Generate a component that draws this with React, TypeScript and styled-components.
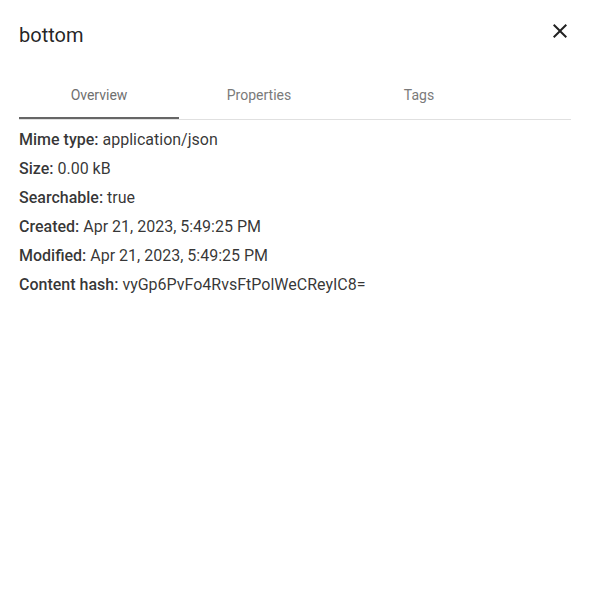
import styled, { createGlobalStyle } from 'styled-components';

const GlobalStyle = createGlobalStyle`
  body {
    margin: 0;
    background: #fff;
    font-family: Roboto, "Liberation Sans", sans-serif;
    -webkit-font-smoothing: antialiased;
  }
`;

const Dialog = styled.div`
  width: 589px;
  height: 591px;
  box-sizing: border-box;
  padding: 0 18px 0 19px;
  background: #fff;
`;

const TitleBar = styled.div`
  display: flex;
  justify-content: space-between;
  align-items: flex-start;
  height: 66px;
`;

const Title = styled.h2`
  margin: 19px 0 0;
  font-size: 20px;
  font-weight: 400;
  line-height: 32px;
  color: rgba(0, 0, 0, 0.87);
`;

const CloseButton = styled.button`
  display: flex;
  width: 24px;
  height: 24px;
  margin: 19px -0.5px 0 0;
  padding: 0;
  border: none;
  background: none;
  color: rgba(0, 0, 0, 0.87);
  cursor: pointer;
`;

const TabBar = styled.div`
  display: flex;
  border-bottom: 1px solid #e0e0e0;
  margin-top: 4px;
`;

const Tab = styled.div<{ $active?: boolean }>`
  position: relative;
  width: 160px;
  height: 49px;
  display: flex;
  align-items: center;
  justify-content: center;
  font-size: 14px;
  font-weight: 400;
  color: ${({ $active }) => ($active ? '#6f6f6f' : '#7a7a7a')};

  &::after {
    content: '';
    display: ${({ $active }) => ($active ? 'block' : 'none')};
    position: absolute;
    left: 0;
    right: 0;
    bottom: 0;
    height: 2px;
    background: #666;
  }
`;

const Details = styled.div`
  padding-top: 5px;
`;

const Row = styled.div`
  font-size: 16px;
  line-height: 29px;
  color: rgba(0, 0, 0, 0.8);
`;

const Label = styled.span`
  font-weight: 500;
`;

const rows: [string, string][] = [
  ['Mime type', 'application/json'],
  ['Size', '0.00 kB'],
  ['Searchable', 'true'],
  ['Created', 'Apr 21, 2023, 5:49:25 PM'],
  ['Modified', 'Apr 21, 2023, 5:49:25 PM'],
  ['Content hash', 'vyGp6PvFo4RvsFtPolWeCReyIC8='],
];

export default function App() {
  return (
    <>
      <GlobalStyle />
      <Dialog>
        <TitleBar>
          <Title>bottom</Title>
          <CloseButton aria-label="close">
            <svg width="24" height="24" viewBox="0 0 24 24" fill="currentColor">
              <path d="M19 6.41 17.59 5 12 10.59 6.41 5 5 6.41 10.59 12 5 17.59 6.41 19 12 13.41 17.59 19 19 17.59 13.41 12z" />
            </svg>
          </CloseButton>
        </TitleBar>
        <TabBar>
          <Tab $active>Overview</Tab>
          <Tab>Properties</Tab>
          <Tab>Tags</Tab>
        </TabBar>
        <Details>
          {rows.map(([k, v]) => (
            <Row key={k}>
              <Label>{k}:</Label> {v}
            </Row>
          ))}
        </Details>
      </Dialog>
    </>
  );
}
